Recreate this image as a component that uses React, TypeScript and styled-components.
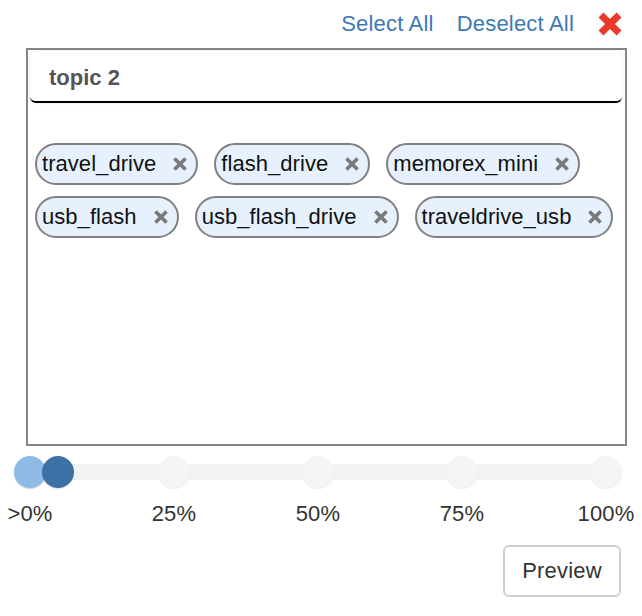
import styled, { createGlobalStyle } from "styled-components";

const GlobalStyle = createGlobalStyle`
  body {
    margin: 0;
    background: #fff;
    font-family: "Liberation Sans", Arial, sans-serif;
  }
`;

const Page = styled.div`
  width: 642px;
  height: 616px;
  display: flex;
  flex-direction: column;
`;

const Toolbar = styled.div`
  height: 48px;
  display: flex;
  justify-content: flex-end;
  align-items: center;
  gap: 23px;
  padding-right: 19px;
`;

const TextLink = styled.a`
  font-size: 22px;
  letter-spacing: 0.2px;
  color: #3b79b7;
  text-decoration: none;
  cursor: pointer;
`;

const Panel = styled.div`
  margin-left: 26px;
  width: 601px;
  height: 398px;
  box-sizing: border-box;
  border: 2px solid #858585;
  padding: 1px 3px 0 2px;
`;

const TopicInput = styled.div`
  height: 52px;
  box-sizing: border-box;
  border-radius: 6px;
  border-bottom: 2px solid #000;
  box-shadow: 0 0 2px rgba(0, 0, 0, 0.18);
  padding: 3px 0 0 19px;
  display: flex;
  align-items: center;
  font-size: 22px;
  font-weight: bold;
  color: #555;
`;

const TagList = styled.div`
  margin-top: 40px;
  padding-left: 5px;
  display: flex;
  flex-wrap: wrap;
  column-gap: 16px;
  row-gap: 11px;
`;

const Tag = styled.div`
  height: 42px;
  box-sizing: border-box;
  border: 2px solid #808080;
  border-radius: 21px;
  background: #e6f1fd;
  padding: 0 8px 0 5px;
  display: flex;
  align-items: center;
  gap: 16px;
  font-size: 22px;
  letter-spacing: 0.05px;
  color: #111;
`;

const Slider = styled.div`
  position: relative;
  margin: 10px 20px 0 14px;
  height: 32px;
  display: flex;
  justify-content: space-between;
  align-items: center;
`;

const Track = styled.div`
  position: absolute;
  left: 0;
  right: 0;
  top: 8px;
  height: 16px;
  border-radius: 8px;
  background: #f2f2f2;
`;

const Stop = styled.div`
  position: relative;
  width: 32px;
  height: 32px;
  border-radius: 50%;
  background: #f5f5f5;
  box-shadow: 0 1px 1px rgba(0, 0, 0, 0.08);
`;

const Thumb = styled.div<{ $at: number; $color: string }>`
  position: absolute;
  top: 0;
  left: ${(p) => p.$at}px;
  width: 32px;
  height: 32px;
  border-radius: 50%;
  background: ${(p) => p.$color};
  box-shadow: 0 1px 1px rgba(0, 0, 0, 0.12);
`;

const Labels = styled.div`
  margin: 13px 20px 0 14px;
  display: flex;
  justify-content: space-between;
`;

const Label = styled.div`
  width: 32px;
  display: flex;
  justify-content: center;
  white-space: nowrap;
  font-size: 22px;
  letter-spacing: 0.2px;
  line-height: 26px;
  color: #333;
`;

const Footer = styled.div`
  margin-top: 18px;
  padding-right: 21px;
  display: flex;
  justify-content: flex-end;
`;

const Button = styled.button`
  width: 118px;
  height: 52px;
  box-sizing: border-box;
  border: 2px solid #cfcfcf;
  border-radius: 6px;
  background: #fff;
  font-family: inherit;
  font-size: 22px;
  letter-spacing: 0.2px;
  color: #333;
  cursor: pointer;
`;

const Cross = ({ size, color, weight }: { size: number; color: string; weight: number }) => (
  <svg width={size} height={size} viewBox="0 0 26 26">
    <path d="M4 4 L22 22 M22 4 L4 22" stroke={color} strokeWidth={weight} strokeLinecap="butt" />
  </svg>
);

const tags = [
  "travel_drive",
  "flash_drive",
  "memorex_mini",
  "usb_flash",
  "usb_flash_drive",
  "traveldrive_usb",
];

const labels = [">0%", "25%", "50%", "75%", "100%"];

export default function App() {
  return (
    <Page>
      <GlobalStyle />
      <Toolbar>
        <TextLink>Select All</TextLink>
        <TextLink>Deselect All</TextLink>
        <Cross size={26} color="#e8392b" weight={7} />
      </Toolbar>
      <Panel>
        <TopicInput>topic 2</TopicInput>
        <TagList>
          {tags.map((t) => (
            <Tag key={t}>
              {t}
              <Cross size={16} color="#7a7a7a" weight={6} />
            </Tag>
          ))}
        </TagList>
      </Panel>
      <Slider>
        <Track />
        {labels.map((l) => (
          <Stop key={l} />
        ))}
        <Thumb $at={0} $color="#8ebbe5" />
        <Thumb $at={28} $color="#3d70a6" />
      </Slider>
      <Labels>
        {labels.map((l) => (
          <Label key={l}>{l}</Label>
        ))}
      </Labels>
      <Footer>
        <Button>Preview</Button>
      </Footer>
    </Page>
  );
}
